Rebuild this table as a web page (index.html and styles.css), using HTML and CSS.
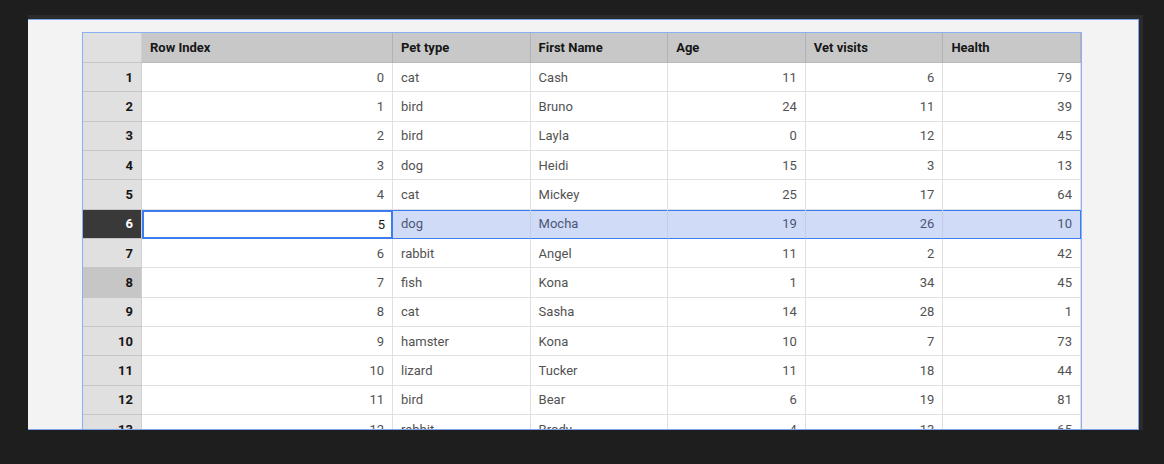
FILE: index.html
```html
<!DOCTYPE html>
<html>
<head>
<meta charset="utf-8">
<link rel="stylesheet" href="styles.css">
</head>
<body>
<div class="frame">
  <div class="panel">
    <div class="grid">
      <div class="hc corner"></div>
      <div class="hc">Row Index</div>
      <div class="hc">Pet type</div>
      <div class="hc">First Name</div>
      <div class="hc">Age</div>
      <div class="hc">Vet visits</div>
      <div class="hc">Health</div>

      <div class="rh">1</div><div class="c n">0</div><div class="c">cat</div><div class="c">Cash</div><div class="c n">11</div><div class="c n">6</div><div class="c n">79</div>
      <div class="rh">2</div><div class="c n">1</div><div class="c">bird</div><div class="c">Bruno</div><div class="c n">24</div><div class="c n">11</div><div class="c n">39</div>
      <div class="rh">3</div><div class="c n">2</div><div class="c">bird</div><div class="c">Layla</div><div class="c n">0</div><div class="c n">12</div><div class="c n">45</div>
      <div class="rh">4</div><div class="c n">3</div><div class="c">dog</div><div class="c">Heidi</div><div class="c n">15</div><div class="c n">3</div><div class="c n">13</div>
      <div class="rh">5</div><div class="c n">4</div><div class="c">cat</div><div class="c">Mickey</div><div class="c n">25</div><div class="c n">17</div><div class="c n">64</div>
      <div class="rh rh-active">6</div><div class="c n cur">5</div><div class="c sel">dog</div><div class="c sel">Mocha</div><div class="c n sel">19</div><div class="c n sel">26</div><div class="c n sel last">10</div>
      <div class="rh">7</div><div class="c n">6</div><div class="c">rabbit</div><div class="c">Angel</div><div class="c n">11</div><div class="c n">2</div><div class="c n">42</div>
      <div class="rh rh-hover">8</div><div class="c n">7</div><div class="c">fish</div><div class="c">Kona</div><div class="c n">1</div><div class="c n">34</div><div class="c n">45</div>
      <div class="rh">9</div><div class="c n">8</div><div class="c">cat</div><div class="c">Sasha</div><div class="c n">14</div><div class="c n">28</div><div class="c n">1</div>
      <div class="rh">10</div><div class="c n">9</div><div class="c">hamster</div><div class="c">Kona</div><div class="c n">10</div><div class="c n">7</div><div class="c n">73</div>
      <div class="rh">11</div><div class="c n">10</div><div class="c">lizard</div><div class="c">Tucker</div><div class="c n">11</div><div class="c n">18</div><div class="c n">44</div>
      <div class="rh">12</div><div class="c n">11</div><div class="c">bird</div><div class="c">Bear</div><div class="c n">6</div><div class="c n">19</div><div class="c n">81</div>
      <div class="rh">13</div><div class="c n">12</div><div class="c">rabbit</div><div class="c">Brody</div><div class="c n">4</div><div class="c n">13</div><div class="c n">65</div>
    </div>
  </div>
</div>
</body>
</html>
```
FILE: styles.css
```css
html, body {
  margin: 0;
  padding: 0;
  background: #1e1e1e;
  width: 1164px;
  height: 464px;
  overflow: hidden;
}

.frame {
  margin: 15px 0 0 28px;
  width: 1115px;
  height: 415px;
  padding: 4px 4px 0 0;
  box-sizing: border-box;
  background: #2b2b2b;
}

.panel {
  width: 1111px;
  height: 411px;
  box-sizing: border-box;
  background: #f3f3f3;
  border-top: 1px solid #7ea3ea;
  border-right: 1px solid #7ea3ea;
  border-bottom: 1px solid #7ea3ea;
  padding: 12px 0 0 54px;
  overflow: hidden;
}

.grid {
  display: grid;
  width: 1000px;
  box-sizing: border-box;
  border: 1px solid #8cb0f6;
  border-bottom: none;
  grid-template-columns: 59px 251px repeat(5, 137.6px);
  grid-template-rows: 30px;
  grid-auto-rows: 29.33px;
  font-family: Roboto, "Noto Sans", sans-serif;
  font-size: 13px;
  background: #ffffff;
}

.hc {
  background: #c8c8c8;
  color: #161616;
  font-weight: 700;
  display: flex;
  align-items: center;
  padding-left: 8px;
  box-sizing: border-box;
  border-right: 1px solid #b3b3b3;
  border-bottom: 1px solid #b8b8b8;
}

.hc.corner {
  background: #e0e0e0;
  border-right: 1px solid #d0d0d0;
  border-bottom: 1px solid #c6c6c6;
}

.rh {
  background: #e0e0e0;
  color: #161616;
  font-weight: 700;
  display: flex;
  align-items: center;
  justify-content: flex-end;
  padding-right: 8px;
  box-sizing: border-box;
  border-right: 1px solid #d0d0d0;
  border-bottom: 1px solid #c6c6c6;
}

.rh-active {
  background: #393939;
  color: #ffffff;
}

.rh-hover {
  background: #c6c6c6;
}

.c {
  color: #525252;
  display: flex;
  align-items: center;
  padding: 0 8px;
  box-sizing: border-box;
  border-right: 1px solid #e0e0e0;
  border-bottom: 1px solid #e0e0e0;
  white-space: nowrap;
}

.c.n {
  justify-content: flex-end;
}

.c.sel {
  background: #d0dbf8;
  color: #4d5675;
  border-bottom-color: #3d7bf0;
  box-shadow: inset 0 1px 0 #3d7bf0;
  border-right-color: #c3cde6;
}

.c.sel.last {
  border-right-color: #3d7bf0;
}

.c.cur {
  background: #ffffff;
  color: #161616;
  border: none;
  box-shadow: inset 0 0 0 2px #3d7bf0;
}
```
